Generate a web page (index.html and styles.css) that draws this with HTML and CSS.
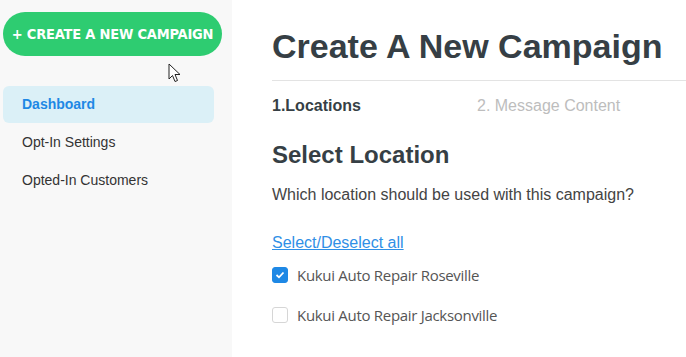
FILE: index.html
```html
<!DOCTYPE html>
<html lang="en">
<head>
    <meta charset="UTF-8">
    <meta name="viewport" content="width=device-width, initial-scale=1.0">
    <title>Create A New Campaign</title>
    <link rel="stylesheet" href="styles.css">
</head>
<body>
    <div class="layout">
        <!-- Sidebar -->
        <div class="sidebar">
            <button class="btn-create">+ Create a new campaign</button>
            <svg class="cursor" width="14" height="20" viewBox="0 0 14 20">
                <path d="M1 1 L1 16 L4.5 12.5 L7 18.5 L9.5 17.5 L7 11.5 L12 11.5 Z" fill="#fff" stroke="#222" stroke-width="1"/>
            </svg>
            <ul class="menu">
                <li class="menu-item active">Dashboard</li>
                <li class="menu-item">Opt-In Settings</li>
                <li class="menu-item">Opted-In Customers</li>
            </ul>
        </div>

        <!-- Main content -->
        <div class="main">
            <h1>Create A New Campaign</h1>
            <div class="steps">
                <span class="step current">1.Locations</span>
                <span class="step">2. Message Content</span>
            </div>
            <h2>Select Location</h2>
            <p class="question">Which location should be used with this campaign?</p>
            <a href="#" class="select-all">Select/Deselect all</a>
            <label class="location">
                <span class="box checked">
                    <svg width="10" height="8" viewBox="0 0 10 8"><path d="M1.5 4 L4 6.3 L8.5 1.5" fill="none" stroke="#fff" stroke-width="1.8"/></svg>
                </span>
                Kukui Auto Repair Roseville
            </label>
            <label class="location">
                <span class="box"></span>
                Kukui Auto Repair Jacksonville
            </label>
        </div>
    </div>
</body>
</html>
```

FILE: styles.css
```css
body {
    margin: 0;
    font-family: Arial, "Liberation Sans", sans-serif;
    color: #333;
    background-color: #fff;
}
.layout {
    display: flex;
    height: 357px;
    overflow: hidden;
}
.sidebar {
    position: relative;
    width: 232px;
    flex-shrink: 0;
    background-color: #f8f8f8;
    padding: 12px 0 0 3px;
    box-sizing: border-box;
}
.btn-create {
    display: block;
    width: 219px;
    height: 44px;
    border: none;
    border-radius: 22px;
    background-color: #2ecc71;
    color: #fff;
    font-family: "DejaVu Sans Condensed", "DejaVu Sans", sans-serif;
    font-weight: bold;
    font-size: 14.5px;
    letter-spacing: -0.2px;
    text-transform: uppercase;
    cursor: pointer;
    padding: 0;
}
.cursor {
    position: absolute;
    left: 168px;
    top: 63px;
}
.menu {
    list-style: none;
    margin: 30px 0 0;
    padding: 0;
}
.menu-item {
    width: 211px;
    height: 37px;
    line-height: 37px;
    padding-left: 19px;
    box-sizing: border-box;
    font-size: 14px;
    color: #333;
    border-radius: 6px;
    margin-bottom: 1px;
}
.menu-item.active {
    background-color: #dbf0f7;
    color: #1e88e5;
    font-weight: bold;
}
.main {
    flex: 1;
    padding: 0 0 0 40px;
}
h1 {
    margin: 24px 0 0;
    font-size: 34px;
    line-height: 44px;
    font-weight: bold;
    color: #363f45;
    padding-bottom: 12px;
    border-bottom: 1px solid #e3e3e3;
}
.steps {
    display: flex;
    margin-top: 15px;
    font-size: 16px;
    line-height: 20px;
}
.step {
    width: 205px;
    color: #bdbdbd;
}
.step.current {
    color: #363f45;
    font-weight: bold;
}
h2 {
    margin: 25px 0 0;
    font-size: 24px;
    line-height: 28px;
    color: #363f45;
}
.question {
    margin: 16px 0 0;
    font-size: 16px;
    line-height: 20px;
    color: #444;
}
.select-all {
    display: inline-block;
    margin-top: 28px;
    font-size: 16px;
    line-height: 20px;
    color: #2f8fe6;
}
.location {
    display: flex;
    align-items: center;
    gap: 9px;
    margin-top: 10px;
    height: 24px;
    font-family: "Open Sans", sans-serif;
    font-size: 15px;
    color: #555;
    letter-spacing: -0.3px;
}
.location + .location {
    margin-top: 16px;
}
.box {
    width: 16px;
    height: 16px;
    box-sizing: border-box;
    border: 1px solid #d6d6d6;
    border-radius: 3px;
    background: #fff;
    display: flex;
    align-items: center;
    justify-content: center;
}
.box.checked {
    background-color: #1e88e5;
    border-color: #1e88e5;
}
```
